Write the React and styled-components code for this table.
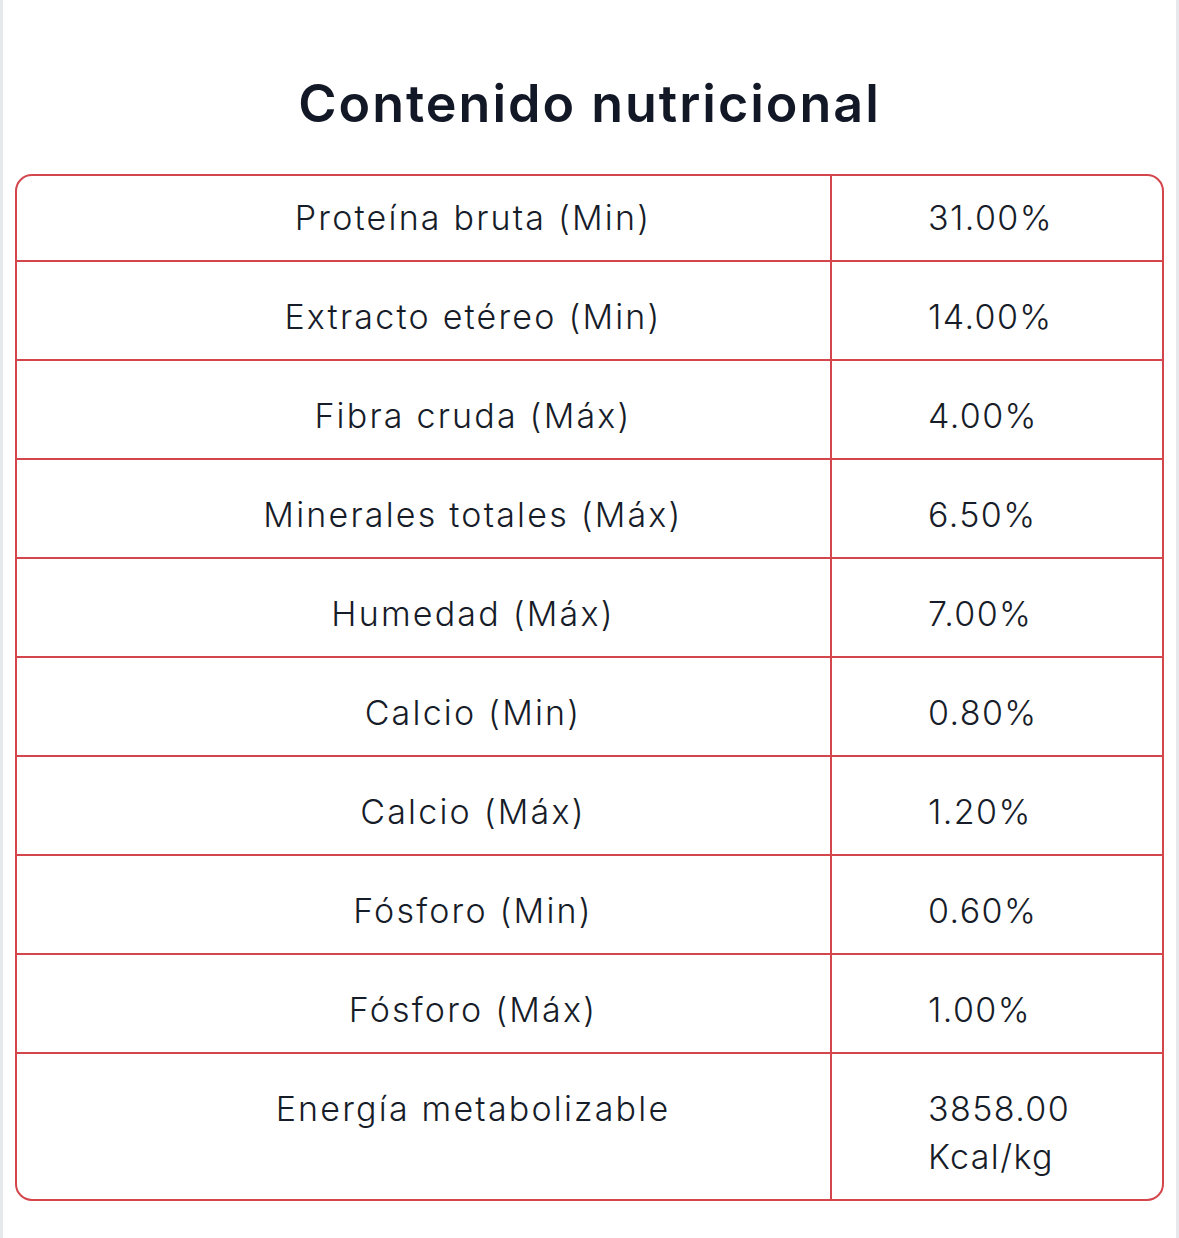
import styled, { createGlobalStyle } from "styled-components";

const rows = [
  ["Proteína bruta (Min)", "31.00%"],
  ["Extracto etéreo (Min)", "14.00%"],
  ["Fibra cruda (Máx)", "4.00%"],
  ["Minerales totales (Máx)", "6.50%"],
  ["Humedad (Máx)", "7.00%"],
  ["Calcio (Min)", "0.80%"],
  ["Calcio (Máx)", "1.20%"],
  ["Fósforo (Min)", "0.60%"],
  ["Fósforo (Máx)", "1.00%"],
  ["Energía metabolizable", "3858.00 Kcal/kg"],
];

export default function App() {
  return (
    <>
      <GlobalStyle />
      <Page>
        <Title>Contenido nutricional</Title>
        <Table>
          {rows.map(([label, value], i) => (
            <Row key={label} $first={i === 0}>
              <Label>{label}</Label>
              <Value>{value}</Value>
            </Row>
          ))}
        </Table>
      </Page>
    </>
  );
}

const GlobalStyle = createGlobalStyle`
  * { box-sizing: border-box; }
  body {
    margin: 0;
    background: #fff;
    font-family: Inter, "Noto Sans", sans-serif;
    color: #171c29;
  }
`;

const Page = styled.div`
  min-height: 100vh;
  border-left: 3px solid #e6e8eb;
  border-right: 3px solid #e6e8eb;
  padding: 73px 12px 36px;
`;

const Title = styled.h2`
  margin: 0 0 39px;
  text-align: center;
  font-size: 52px;
  line-height: 62px;
  font-weight: 600;
  letter-spacing: 2px;
  color: #131826;
`;

const Table = styled.div`
  border: 2px solid #d4454c;
  border-radius: 17px;
  overflow: hidden;
`;

const Row = styled.div`
  display: grid;
  grid-template-columns: 1fr 332px;
  border-bottom: 2px solid #d4454c;
  font-size: 34px;
  line-height: 48px;
  font-weight: 300;

  &:last-child {
    border-bottom: none;
  }

  & > div {
    padding-top: ${(p) => (p.$first ? "18px" : "31px")};
    padding-bottom: 18px;
  }
`;

const Label = styled.div`
  text-align: center;
  padding-left: 99px;
  letter-spacing: 2.2px;
`;

const Value = styled.div`
  border-left: 2px solid #d4454c;
  padding-left: 96px;
  padding-right: 20px;
  letter-spacing: 1.4px;
`;
